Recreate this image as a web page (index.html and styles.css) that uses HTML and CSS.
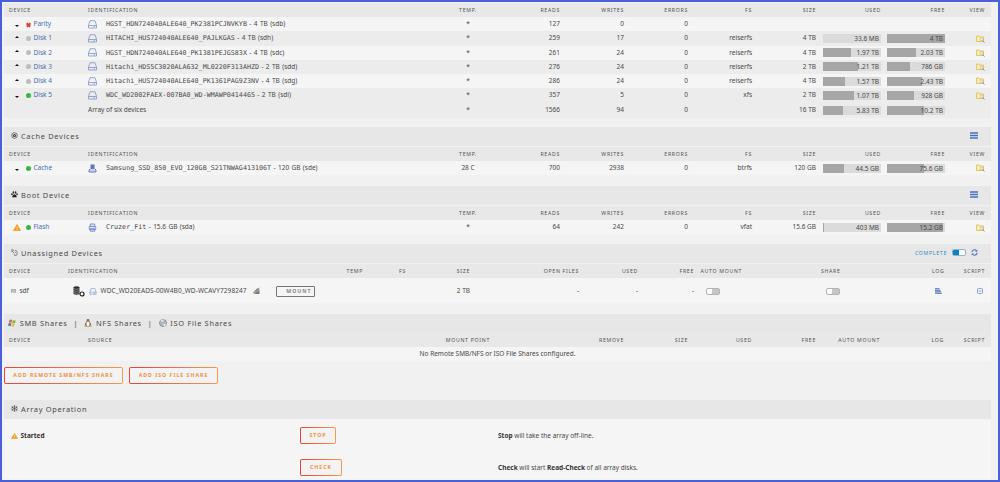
FILE: index.html
```html
<!DOCTYPE html>
<html lang="en">
<head>
    <meta charset="UTF-8">
    <meta name="viewport" content="width=device-width, initial-scale=1.0">
    <title>Main</title>
    <link rel="stylesheet" href="styles.css">
</head>
<body>
    <svg class="defs" xmlns="http://www.w3.org/2000/svg">
        <symbol id="hdd" viewBox="0 0 18 18">
            <path d="M4 1.5h10l3 9v5.5H1v-5.5z M1 11h16 M11 13.6h3" fill="none" stroke="#7d93cb" stroke-width="1.6"/>
        </symbol>
        <symbol id="browse" viewBox="0 0 18 16">
            <path d="M1 2h5l1 2h8v9H1z" fill="#f8edc0" stroke="#e2c353" stroke-width="1.8"/>
            <circle cx="11" cy="9" r="3" fill="#eee" stroke="#b9b39c" stroke-width="1.2"/>
            <path d="M13 11l4 4" stroke="#8f8f98" stroke-width="2"/>
        </symbol>
        <symbol id="list" viewBox="0 0 16 14">
            <path d="M0 2h16M0 7h16M0 12h16" stroke="#4a70c0" stroke-width="3"/>
        </symbol>
        <symbol id="warn" viewBox="0 0 16 14">
            <path d="M8 1l7 12H1z" fill="#f0a020" stroke="#f0a020" stroke-width="1.6" stroke-linejoin="round"/>
            <path d="M8 5v4M8 10.3v1.6" stroke="#fff3d0" stroke-width="1.5"/>
        </symbol>
    </svg>

    <div class="frame">
        <div class="table devices array">
            <div class="row head">
                <span>Device</span><span>Identification</span><span>Temp.</span><span>Reads</span><span>Writes</span><span>Errors</span><span>FS</span><span>Size</span><span>Used</span><span>Free</span><span>View</span>
            </div>
            <div class="row">
                <span class="dev"><i class="caret down"></i><i class="cross"></i><a>Parity</a></span>
                <span class="id"><svg class="hdd"><use href="#hdd"/></svg><code>HGST_HDN724040ALE640_PK2381PCJNVKYB</code> - 4 TB (sdb)</span>
                <span>*</span><span>127</span><span>0</span><span>0</span><span></span><span></span><span></span><span></span><span></span>
            </div>
            <div class="row alt">
                <span class="dev"><i class="caret up"></i><i class="dot"></i><a>Disk 1</a></span>
                <span class="id"><svg class="hdd"><use href="#hdd"/></svg><code>HITACHI_HUS724040ALE640_PAJLKGAS</code> - 4 TB (sdh)</span>
                <span>*</span><span>259</span><span>17</span><span>0</span><span>reiserfs</span><span>4 TB</span>
                <span class="bar"><i style="width:0%"></i><b>33.6 MB</b></span>
                <span class="bar"><i style="width:100%"></i><b>4 TB</b></span>
                <span><svg class="browse"><use href="#browse"/></svg></span>
            </div>
            <div class="row">
                <span class="dev"><i class="caret up"></i><i class="dot"></i><a>Disk 2</a></span>
                <span class="id"><svg class="hdd"><use href="#hdd"/></svg><code>HGST_HDN724040ALE640_PK1381PEJGS83X</code> - 4 TB (sdc)</span>
                <span>*</span><span>261</span><span>24</span><span>0</span><span>reiserfs</span><span>4 TB</span>
                <span class="bar"><i style="width:49%"></i><b>1.97 TB</b></span>
                <span class="bar"><i style="width:50%"></i><b>2.03 TB</b></span>
                <span><svg class="browse"><use href="#browse"/></svg></span>
            </div>
            <div class="row alt">
                <span class="dev"><i class="caret up"></i><i class="dot"></i><a>Disk 3</a></span>
                <span class="id"><svg class="hdd"><use href="#hdd"/></svg><code>Hitachi_HDS5C3020ALA632_ML0220F313AHZD</code> - 2 TB (sdd)</span>
                <span>*</span><span>276</span><span>24</span><span>0</span><span>reiserfs</span><span>2 TB</span>
                <span class="bar"><i style="width:61%"></i><b>1.21 TB</b></span>
                <span class="bar"><i style="width:39%"></i><b>786 GB</b></span>
                <span><svg class="browse"><use href="#browse"/></svg></span>
            </div>
            <div class="row">
                <span class="dev"><i class="caret up"></i><i class="dot"></i><a>Disk 4</a></span>
                <span class="id"><svg class="hdd"><use href="#hdd"/></svg><code>Hitachi_HUS724040ALE640_PK1361PAG9Z3NV</code> - 4 TB (sdg)</span>
                <span>*</span><span>286</span><span>24</span><span>0</span><span>reiserfs</span><span>4 TB</span>
                <span class="bar"><i style="width:38%"></i><b>1.57 TB</b></span>
                <span class="bar"><i style="width:61%"></i><b>2.43 TB</b></span>
                <span><svg class="browse"><use href="#browse"/></svg></span>
            </div>
            <div class="row alt">
                <span class="dev"><i class="caret down"></i><i class="dot on"></i><a>Disk 5</a></span>
                <span class="id"><svg class="hdd"><use href="#hdd"/></svg><code>WDC_WD2002FAEX-007BA0_WD-WMAWP0414465</code> - 2 TB (sdi)</span>
                <span>*</span><span>357</span><span>5</span><span>0</span><span>xfs</span><span>2 TB</span>
                <span class="bar"><i style="width:53%"></i><b>1.07 TB</b></span>
                <span class="bar"><i style="width:46%"></i><b>928 GB</b></span>
                <span><svg class="browse"><use href="#browse"/></svg></span>
            </div>
            <div class="row total">
                <span></span><span>Array of six devices</span>
                <span>*</span><span>1566</span><span>94</span><span>0</span><span></span><span>16 TB</span>
                <span class="bar"><i style="width:35%"></i><b>5.83 TB</b></span>
                <span class="bar"><i style="width:64%"></i><b>10.2 TB</b></span>
                <span></span>
            </div>
        </div>

        <div class="title">
            <svg class="ticon" viewBox="0 0 14 14"><circle cx="7" cy="7" r="5.6" fill="none" stroke="#555" stroke-width="1.6"/><circle cx="7" cy="7" r="3.2" fill="#444"/><circle cx="7" cy="7" r="1" fill="#ccc"/></svg>
            <span>Cache Devices</span>
            <svg class="list"><use href="#list"/></svg>
        </div>
        <div class="table devices cache">
            <div class="row head">
                <span>Device</span><span>Identification</span><span>Temp.</span><span>Reads</span><span>Writes</span><span>Errors</span><span>FS</span><span>Size</span><span>Used</span><span>Free</span><span>View</span>
            </div>
            <div class="row">
                <span class="dev"><i class="caret down"></i><i class="dot on"></i><a>Cache</a></span>
                <span class="id"><svg class="hdd" viewBox="0 0 18 18"><path d="M5 1h8v9H5z" fill="#5877bd"/><path d="M4 10l-2 2v4h14v-4l-2-2" fill="#c9d3ea" stroke="#5877bd" stroke-width="1.8"/></svg><code>Samsung_SSD_850_EVO_120GB_S21TNWAG413106T</code> - 120 GB (sde)</span>
                <span>28 C</span><span>700</span><span>2938</span><span>0</span><span>btrfs</span><span>120 GB</span>
                <span class="bar"><i style="width:36%"></i><b>44.5 GB</b></span>
                <span class="bar"><i style="width:63%"></i><b>75.6 GB</b></span>
                <span><svg class="browse"><use href="#browse"/></svg></span>
            </div>
        </div>

        <div class="title">
            <svg class="ticon" viewBox="0 0 14 14" fill="#222"><ellipse cx="4.8" cy="3" rx="1.6" ry="2.3"/><ellipse cx="9.2" cy="3" rx="1.6" ry="2.3"/><ellipse cx="1.9" cy="6.4" rx="1.6" ry="2"/><ellipse cx="12.1" cy="6.4" rx="1.6" ry="2"/><path d="M7 6.5c2 0 4.5 3 4.5 5 0 2.4-3 1-4.5 1s-4.5 1.4-4.5-1c0-2 2.5-5 4.5-5z"/></svg>
            <span>Boot Device</span>
            <svg class="list"><use href="#list"/></svg>
        </div>
        <div class="table devices boot">
            <div class="row head">
                <span>Device</span><span>Identification</span><span>Temp.</span><span>Reads</span><span>Writes</span><span>Errors</span><span>FS</span><span>Size</span><span>Used</span><span>Free</span><span>View</span>
            </div>
            <div class="row">
                <span class="dev"><svg class="warn"><use href="#warn"/></svg><i class="dot on"></i><a>Flash</a></span>
                <span class="id"><svg class="hdd" viewBox="0 0 18 18"><path d="M4.5 7V2h9v5M2.5 7h13v6h-13zM4.5 11.5h9v5h-9z" fill="#dfe5f3" stroke="#7089c4" stroke-width="1.7"/></svg><code>Cruzer_Fit</code> - 15.6 GB (sda)</span>
                <span>*</span><span>64</span><span>242</span><span>0</span><span>vfat</span><span>15.6 GB</span>
                <span class="bar"><i style="width:2%"></i><b>403 MB</b></span>
                <span class="bar"><i style="width:97%"></i><b>15.2 GB</b></span>
                <span><svg class="browse"><use href="#browse"/></svg></span>
            </div>
        </div>

        <div class="title">
            <svg class="ticon" viewBox="0 0 14 14" fill="none" stroke="#555" stroke-width="1.3"><path d="M6 6L3.5 8.5M8 8l2-2M4.5 4.5L2 5.5 1 3.5 3.5 1.500l3 1.500M8 3l3 .5 1.500 3-1 2M6 9.500l1 3 3 .5 2.500-2-1-2.500M1 .8l2 2"/></svg>
            <span>Unassigned Devices</span>
            <span class="complete">Complete</span><i class="switch on"></i>
            <svg class="refresh" viewBox="0 0 16 16" fill="none" stroke="#4a6cb0" stroke-width="2.4"><path d="M2 7a6 6 0 0 1 10.5-3M14 9a6 6 0 0 1-10.5 3"/><path d="M14.5 1v5h-5zM1.5 15v-5h5z" fill="#4a6cb0" stroke="none"/></svg>
        </div>
        <div class="table unassigned">
            <div class="row head">
                <span>Device</span><span>Identification</span><span></span><span>Temp</span><span>FS</span><span>Size</span><span>Open files</span><span>Used</span><span>Free</span><span>Auto mount</span><span>Share</span><span>Log</span><span>Script</span>
            </div>
            <div class="row">
                <span class="dev"><i class="plug"></i>sdf</span>
                <span class="id">
                    <svg class="db" viewBox="0 0 24 22"><path d="M1 2q6-3 12 0v14q-6 3-12 0z" fill="#2b2b2b"/><path d="M1 5.5q6 2 12 0M1 9.5q6 2 12 0M1 13.5q6 2 12 0" fill="none" stroke="#ddd" stroke-width="1"/><circle cx="18" cy="16" r="4" fill="#f4f4f4" stroke="#222" stroke-width="2.4"/></svg>
                    <svg class="hdd low"><use href="#hdd"/></svg>
                    <em>WDC_WD20EADS-00W4B0_WD-WCAVY7298247</em>
                    <svg class="erase" viewBox="0 0 18 16"><path d="M1 12l9-9 5-2-1 6-5 5z" fill="#a9a49b"/><path d="M6 9l7-6M8 12l8-5" stroke="#5f5f5f" stroke-width="1.5"/><path d="M2 14h13v-5z" fill="#777"/><path d="M3 10l3 3" stroke="#d79a45" stroke-width="2"/></svg>
                </span>
                <span><button class="mount">Mount</button></span><span></span><span></span><span>2 TB</span><span>-</span><span>-</span><span>-</span>
                <span><i class="switch"></i></span><span><i class="switch"></i></span>
                <span><svg class="log" viewBox="0 0 14 12"><path d="M0 1.5h9M0 4.5h11M0 7.5h12M0 10.5h14" stroke="#4f72bb" stroke-width="2.2"/></svg></span>
                <span><svg class="script" viewBox="0 0 12 12"><rect x="1" y="1" width="10" height="10" rx="2" fill="none" stroke="#6f88c2" stroke-width="1.5"/><path d="M3 6h6" stroke="#6f88c2" stroke-width="1.5"/></svg></span>
            </div>
        </div>

        <div class="title shares">
            <svg class="win" viewBox="0 0 16 16"><path d="M3 2q3-2 5.5 0L7 7.5q-3-1.5-5.5 0z" fill="#d9683c"/><path d="M9.5 2.5q3 1.5 6 0L14 8q-3 1.5-5.5 0z" fill="#7fb03c"/><path d="M1.2 8.800q3-1.800 5.500 0L5.300 14q-3-1.500-5.300 0z" fill="#4478c0"/><path d="M8 9.200q3 1.600 5.600 0L12 14.800q-3 1.500-5.500 0z" fill="#ecbb35"/></svg>
            <span>SMB Shares</span><span class="sep">|</span>
            <svg class="tux" viewBox="0 0 14 16"><path d="M7 0c3 0 3 3 3 5 1 2 3 4 3 7l-2 3H3l-2-3c0-3 2-5 3-7 0-2 0-5 3-5z" fill="#666"/><ellipse cx="7" cy="10" rx="3.4" ry="4.6" fill="#f5f5f5"/><path d="M5.5 4h3L7 6zM0 12l4 3-3 1zM14 12l-4 3 3 1z" fill="#eeb02e" stroke="#eeb02e"/></svg>
            <span>NFS Shares</span><span class="sep">|</span>
            <svg class="disc" viewBox="0 0 16 16"><circle cx="8" cy="8" r="7" fill="#b8bcc2" stroke="#777d86" stroke-width="1.4"/><path d="M8 8L3 3a7 7 0 0 1 6-2zM8 8l6 3a7 7 0 0 1-4 4z" fill="#e8ebee"/><circle cx="8" cy="8" r="2" fill="#eee" stroke="#777"/></svg>
            <span>ISO File Shares</span>
        </div>
        <div class="table remote">
            <div class="row head">
                <span>Device</span><span>Source</span><span>Mount point</span><span>Remove</span><span>Size</span><span>Used</span><span>Free</span><span>Auto mount</span><span>Log</span><span>Script</span>
            </div>
            <div class="empty">No Remote SMB/NFS or ISO File Shares configured.</div>
        </div>
        <div class="buttons">
            <button class="btn add-smb">Add remote SMB/NFS share</button>
            <button class="btn add-iso">Add ISO file share</button>
        </div>

        <div class="title">
            <svg class="ticon" viewBox="0 0 14 14" fill="none" stroke="#444" stroke-width="1.3"><path d="M7 .5v13M1.3 3.7l11.4 6.6M12.7 3.7L1.3 10.3M5 1.5l2 2 2-2M5 12.5l2-2 2 2M1 6l2.5-.8L3.2 2.5M13 6l-2.5-.8.3-2.7M1 8l2.5.8-.3 2.7M13 8l-2.5.8.3 2.7"/></svg>
            <span>Array Operation</span>
        </div>
        <div class="operation">
            <div class="op">
                <span class="state"><svg class="warn"><use href="#warn"/></svg><strong>Started</strong></span>
                <span><button class="btn stop">Stop</button></span>
                <span><strong>Stop</strong> will take the array off-line.</span>
            </div>
            <div class="op">
                <span></span>
                <span><button class="btn check">Check</button></span>
                <span><strong>Check</strong> will start <strong>Read-Check</strong> of all array disks.</span>
            </div>
        </div>
    </div>
</body>
</html>
```
FILE: styles.css
```css
* {
    box-sizing: border-box;
}
body {
    margin: 0;
    font-family: "Noto Sans", sans-serif;
    font-size: 6.5px;
    color: #484848;
    background-color: #f1f1f1;
}
.defs {
    display: none;
}
svg {
    flex: none;
}
.frame {
    width: 1000px;
    height: 482px;
    border: 2px solid #4a5fdc;
    padding: 1px 7px 0 2px;
    overflow: hidden;
}

/* tables */
.array {
    height: 124px;
}
.cache {
    margin-bottom: 11px;
}
.boot {
    margin-bottom: 9.5px;
}
.row {
    display: grid;
    align-items: center;
    height: 14.25px;
    line-height: 14px;
    background-color: #f5f5f5;
    white-space: nowrap;
}
.row.alt,
.row.total {
    background-color: #ececec;
}
.row.total {
    height: 15px;
}
.row.head {
    height: 14px;
    background-color: #e8e8e8;
    font-size: 5.2px;
    letter-spacing: 0.7px;
    text-transform: uppercase;
    color: #505050;
}
.row > span {
    text-align: right;
}
.devices .row {
    grid-template-columns: 84px 348px 64px 60px 64px 64px 64px 64px 65px 64px 40px;
}
.row > span:nth-child(1),
.row > span:nth-child(2) {
    text-align: left;
}
.devices .row > span:nth-child(3) {
    text-align: center;
}
.row.head > span:first-child {
    padding-left: 5px;
}
.devices .row > span.dev {
    display: flex;
    align-items: center;
    padding-left: 8.5px;
}
a {
    color: #486db0;
}
.id {
    display: flex;
    align-items: center;
    white-space: pre;
    word-spacing: 0.7px;
}
code {
    font-family: "DejaVu Sans Mono", monospace;
    font-size: 6.7px;
}
.hdd {
    width: 9px;
    height: 9px;
    margin-right: 9px;
}
.browse {
    display: inline-block;
    vertical-align: middle;
    width: 9px;
    height: 8px;
}

/* status marks */
.caret {
    width: 4px;
    margin: 0 7.5px 0 2px;
    border: 2px solid transparent;
}
.caret.down {
    border-top-color: #111;
    margin-top: 3px;
    border-bottom: 0;
}
.caret.up {
    border-bottom-color: #111;
    margin-top: -3px;
    border-top: 0;
}
.dot {
    width: 5px;
    height: 5px;
    margin-right: 2.5px;
    border-radius: 50%;
    background-color: #bdbdbd;
}
.dot.on {
    background-color: #35b93a;
}
.cross {
    position: relative;
    width: 5px;
    height: 5px;
    margin-right: 2.5px;
}
.cross::before,
.cross::after {
    content: "";
    position: absolute;
    left: 0;
    top: 2px;
    width: 5px;
    height: 1.6px;
    background-color: #e0402e;
    transform: rotate(45deg);
}
.cross::after {
    transform: rotate(-45deg);
}
.warn {
    width: 8px;
    height: 7px;
}
.dev .warn {
    margin-right: 5.5px;
}

/* usage bars */
.bar {
    position: relative;
    justify-self: end;
    width: 58px;
    height: 9px;
    line-height: 9px;
    background-color: #dbdbdb;
}
.bar i {
    display: block;
    height: 100%;
    background-color: #a6a6a6;
}
.bar b {
    position: absolute;
    right: 2px;
    top: 0;
    font-weight: normal;
}

/* section titles */
.title {
    display: flex;
    align-items: center;
    height: 19px;
    margin-bottom: 1px;
    padding: 0 0 2px 7px;
    background-color: #e7e7e7;
    font-size: 7.4px;
    letter-spacing: 0.7px;
}
.ticon {
    width: 7px;
    height: 7px;
    margin-right: 3px;
}
.list {
    width: 8px;
    height: 7px;
    margin-left: auto;
    margin-right: 13px;
}
.complete {
    margin-left: auto;
    font-size: 5.2px;
    text-transform: uppercase;
    color: #2a8fc4;
}
.switch {
    display: inline-block;
    width: 14px;
    height: 7px;
    border: 1px solid #b5b5b5;
    border-radius: 2px;
    background: linear-gradient(90deg, #fff 45%, #c6c6c6 45%);
}
.switch.on {
    margin: 0 5px;
    border-color: #8fb4cc;
    background: linear-gradient(90deg, #0a84c4 50%, #fff 50%);
}
.refresh {
    width: 7px;
    height: 7px;
    margin-right: 13px;
}

/* unassigned devices */
.unassigned {
    margin-bottom: 11px;
}
.unassigned .row {
    grid-template-columns: 64px 206px 55px 34px 43px 64px 109px 59px 56px 127px 111px 13px 40px;
}
.unassigned .row:not(.head) {
    height: 25px;
    padding-top: 1px;
}
.unassigned .row > span:nth-child(10),
.unassigned .row > span:nth-child(11),
.unassigned .row > span:nth-child(12) {
    text-align: left;
}
.unassigned .head > span:nth-child(10) {
    padding-left: 6.5px;
}
.unassigned .dev {
    display: flex;
    align-items: center;
    padding-left: 7px;
}
.plug {
    width: 5px;
    height: 4px;
    margin-right: 3.5px;
    border: 1px solid #a9b0b0;
    border-bottom-color: #ccc;
    background-color: #b9c4c0;
}
.unassigned .id {
    padding-left: 5px;
    white-space: nowrap;
}
.unassigned em {
    font-style: normal;
    letter-spacing: 0.1px;
}
.db {
    width: 12px;
    height: 11px;
    margin-right: 3.5px;
}
.hdd.low {
    width: 8px;
    height: 7px;
    margin-right: 4px;
}
.erase {
    width: 9px;
    height: 8px;
    margin-left: 5px;
}
.unassigned .row > span:nth-child(3) {
    display: flex;
    padding-left: 1.5px;
}
.mount {
    width: 39px;
    height: 11px;
    padding: 0 2px 0 0;
    border: 1px solid #777;
    border-radius: 1px;
    background: none;
    font: bold 5.2px/9px "Noto Sans", sans-serif;
    letter-spacing: 1px;
    text-align: right;
    text-transform: uppercase;
    color: #888;
}
.unassigned .switch {
    display: block;
    margin-left: 11.5px;
}
.unassigned span:nth-child(11) .switch {
    margin-left: 5px;
}
.log {
    display: block;
    width: 7px;
    height: 6px;
    margin-left: 3px;
}
.script {
    display: block;
    width: 6px;
    height: 6px;
    margin: 0 2px 0 auto;
}

/* remote shares */
.shares {
    margin-bottom: 0;
    padding-left: 4px;
}
.shares .sep {
    margin: 0 6px;
}
.win,
.tux,
.disc {
    width: 8px;
    height: 8px;
    margin-right: 3.7px;
}
.remote {
    margin-bottom: 6px;
}
.remote .row {
    grid-template-columns: 84px 200px 202px 134px 64px 64px 64px 64px 64px 41px;
}
.empty {
    height: 14px;
    line-height: 14px;
    background-color: #f5f5f5;
    text-align: center;
}

/* buttons */
.buttons {
    display: flex;
    gap: 6px;
    height: 33px;
}
.btn {
    display: block;
    height: 17px;
    padding: 0;
    border: 1px solid transparent;
    border-radius: 2px;
    background: linear-gradient(#f3f3f3, #f3f3f3) padding-box, linear-gradient(90deg, #e0453c, #f59a50) border-box;
    font: bold 5.2px/15px "Noto Sans", sans-serif;
    letter-spacing: 1px;
    text-align: center;
    text-transform: uppercase;
    white-space: nowrap;
    color: #ee9140;
}
.add-smb {
    width: 119px;
}
.add-iso {
    width: 89px;
}
.stop {
    width: 36px;
}
.check {
    width: 42px;
}

/* array operation */
.operation {
    height: 63px;
    margin-top: -1px;
    padding-top: 1px;
    background-color: #f5f5f5;
}
.op {
    display: grid;
    grid-template-columns: 296px 198px 1fr;
    align-items: center;
    height: 31.5px;
}
.state {
    display: flex;
    align-items: center;
    padding-left: 7px;
}
.state .warn {
    width: 7px;
    height: 6px;
    margin-right: 2.5px;
}
strong {
    color: #333;
}
```
